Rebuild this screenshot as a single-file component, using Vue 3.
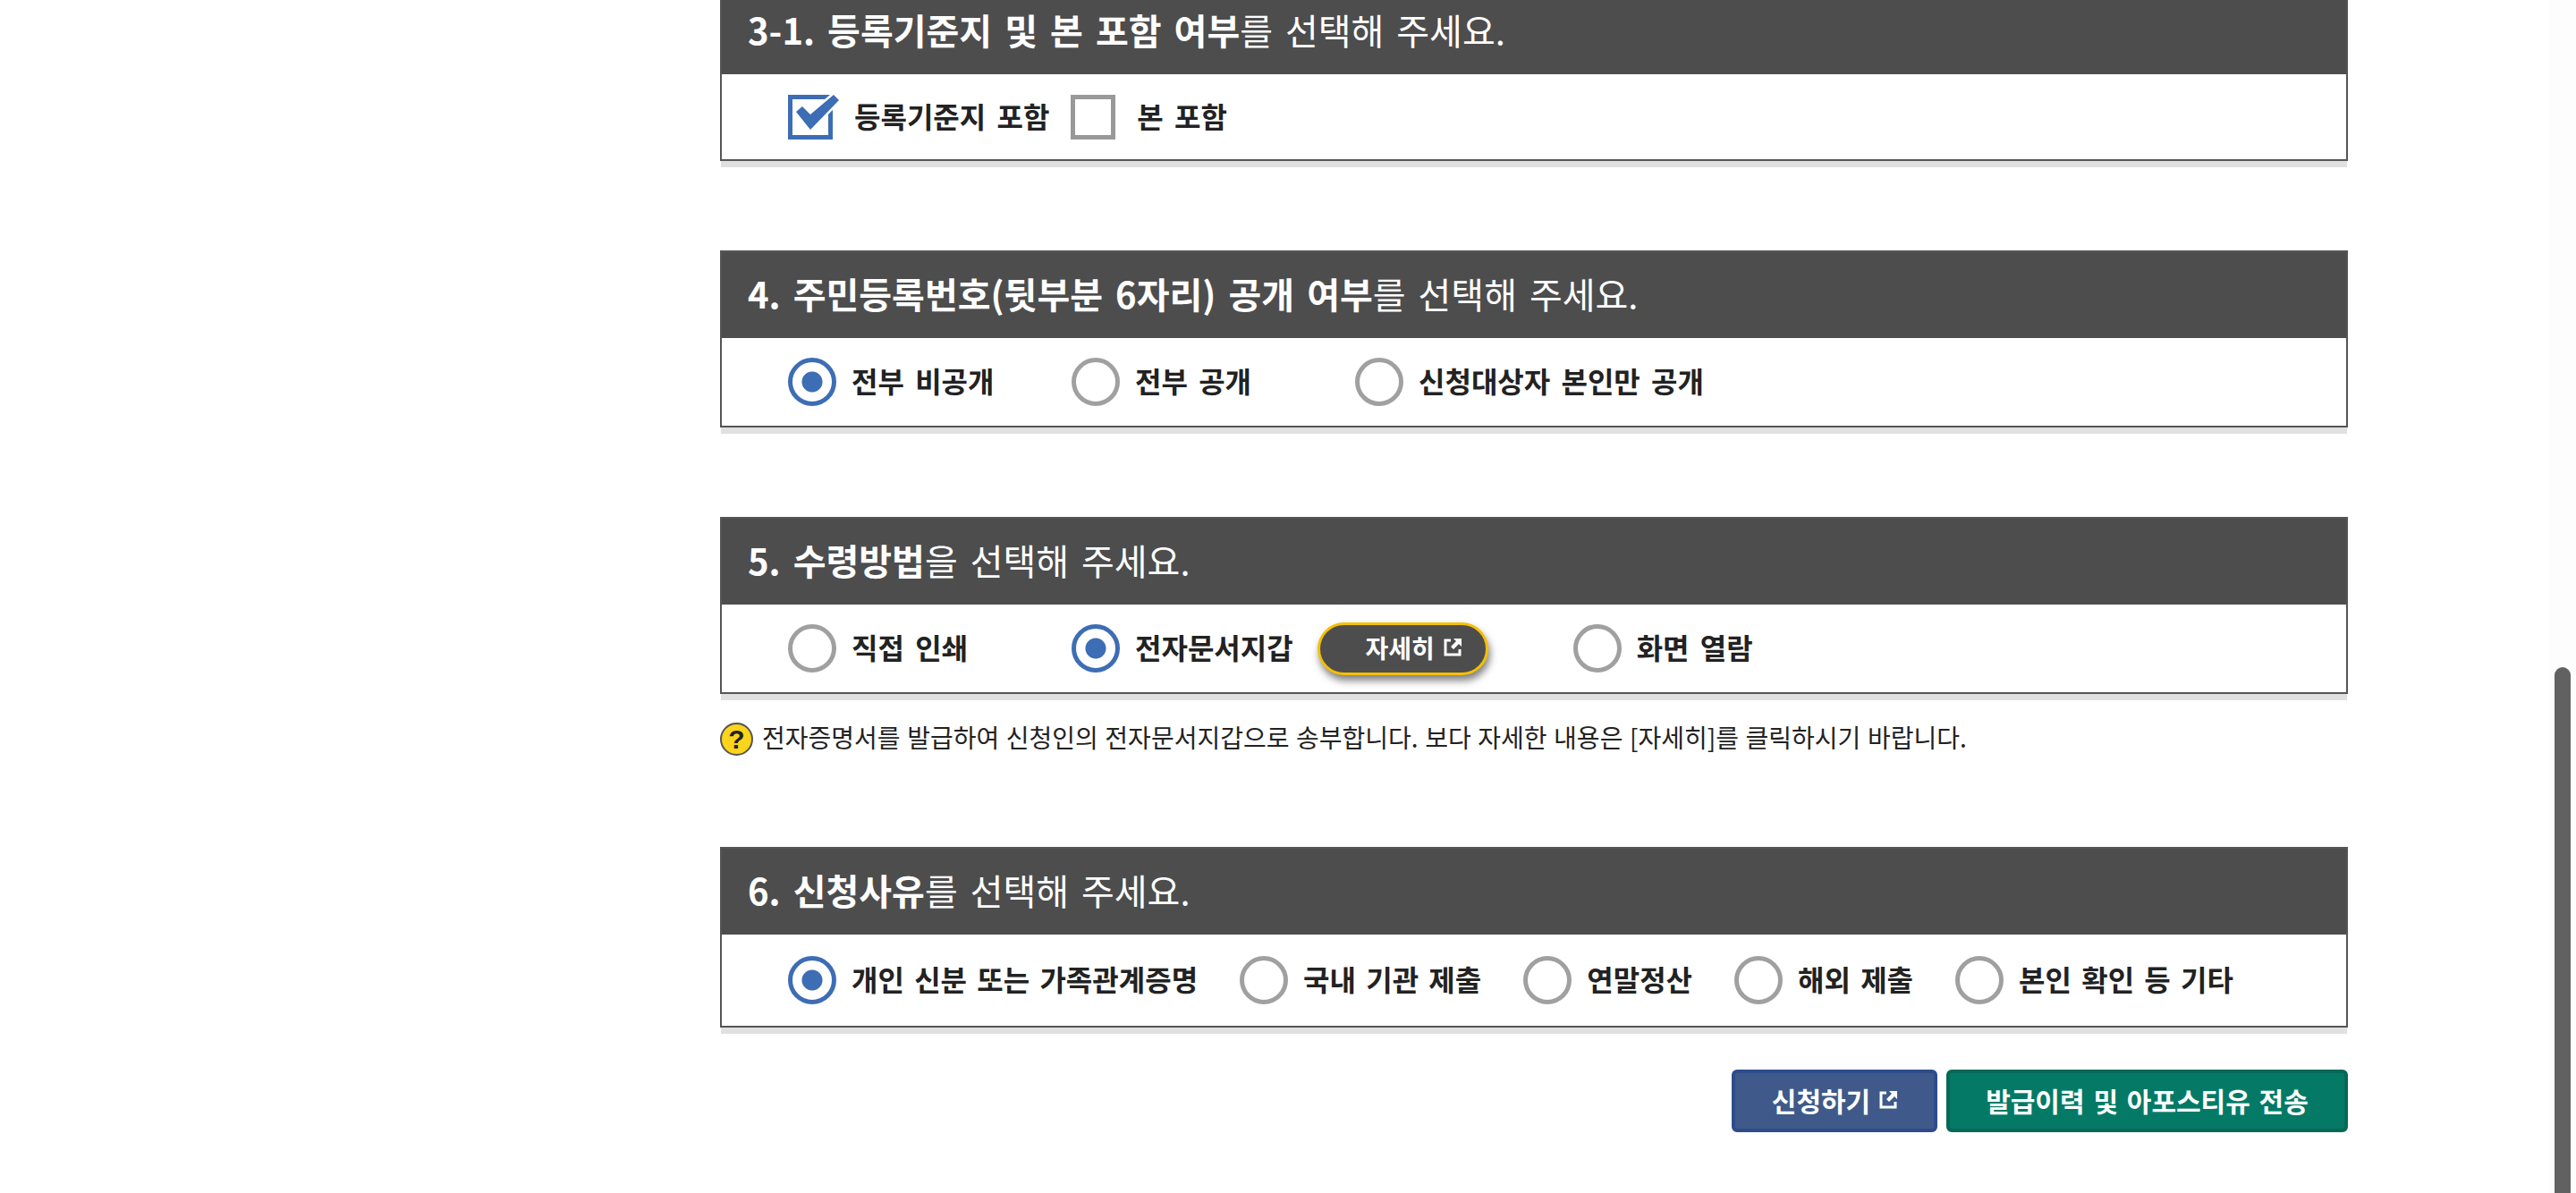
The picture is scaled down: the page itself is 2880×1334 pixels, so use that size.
<script setup>
// one entry per form section, selected option is marked with checked
const residentOptions = [
  { label: '전부 비공개', checked: true },
  { label: '전부 공개' },
  { label: '신청대상자 본인만 공개' }
]
const reasonOptions = [
  { label: '개인 신분 또는 가족관계증명', checked: true },
  { label: '국내 기관 제출' },
  { label: '연말정산' },
  { label: '해외 제출' },
  { label: '본인 확인 등 기타' }
]
</script>

<template>
  <div class="page">
    <section class="block first">
      <h2 class="head"><strong>3-1. 등록기준지 및 본 포함 여부</strong>를 선택해 주세요.</h2>
      <div class="body check-row">
        <label class="check-item">
          <span class="box on">
            <svg class="tick" viewBox="0 0 60 50">
              <path d="M9 19 L16 13 L25 22 L51 0 L57 6 L25 39 Z" fill="#fff" stroke="#fff" stroke-width="5" />
              <path d="M9 19 L16 13 L25 22 L51 0 L57 6 L25 39 Z" fill="#3d6db5" />
            </svg>
          </span>
          <span class="text">등록기준지 포함</span>
        </label>
        <label class="check-item">
          <span class="box"></span>
          <span class="text">본 포함</span>
        </label>
      </div>
    </section>

    <section class="block">
      <h2 class="head"><strong>4. 주민등록번호(뒷부분 6자리) 공개 여부</strong>를 선택해 주세요.</h2>
      <div class="body radio-row">
        <label v-for="opt in residentOptions" :key="opt.label" class="radio-item fixed">
          <span class="radio" :class="{ on: opt.checked }"></span>
          <span class="text">{{ opt.label }}</span>
        </label>
      </div>
    </section>

    <section class="block">
      <h2 class="head"><strong>5. 수령방법</strong>을 선택해 주세요.</h2>
      <div class="body radio-row">
        <label class="radio-item fixed">
          <span class="radio"></span>
          <span class="text">직접 인쇄</span>
        </label>
        <label class="radio-item">
          <span class="radio on"></span>
          <span class="text">전자문서지갑</span>
        </label>
        <button class="more" type="button">
          자세히
          <svg class="ext" viewBox="0 0 20 20"><path d="M8 2H2v16h16v-6" fill="none" stroke="currentColor" stroke-width="3" /><path d="M11 0h9v9l-3-3-6 6-3-3 6-6z" fill="currentColor" /></svg>
        </button>
        <label class="radio-item last">
          <span class="radio"></span>
          <span class="text">화면 열람</span>
        </label>
      </div>
    </section>

    <p class="help">
      <span class="help-icon">?</span>
      <span class="help-text">전자증명서를 발급하여 신청인의 전자문서지갑으로 송부합니다. 보다 자세한 내용은 [자세히]를 클릭하시기 바랍니다.</span>
    </p>

    <section class="block reason">
      <h2 class="head"><strong>6. 신청사유</strong>를 선택해 주세요.</h2>
      <div class="body radio-row spaced">
        <label v-for="opt in reasonOptions" :key="opt.label" class="radio-item">
          <span class="radio" :class="{ on: opt.checked }"></span>
          <span class="text">{{ opt.label }}</span>
        </label>
      </div>
    </section>

    <div class="actions">
      <button class="btn blue" type="button">
        신청하기
        <svg class="ext" viewBox="0 0 20 20"><path d="M8 2H2v16h16v-6" fill="none" stroke="currentColor" stroke-width="3" /><path d="M11 0h9v9l-3-3-6 6-3-3 6-6z" fill="currentColor" /></svg>
      </button>
      <button class="btn green" type="button">발급이력 및 아포스티유 전송</button>
    </div>

    <!-- page scrollbar, the shot was taken scrolled to the bottom -->
    <div class="scrollbar"><div class="thumb"></div></div>
  </div>
</template>

<style>
html, body {
  overflow: hidden;
  background: #fff;
}
</style>

<style scoped>
.page {
  width: 1820px;
  margin-left: 805px;
  margin-top: -15px;
  font-family: "Noto Sans CJK KR", "Noto Sans", sans-serif;
  color: #222;
}

.block {
  margin-top: 100px;
  border: 2px solid #555;
  background: #fff;
  box-shadow: 0 8px 0 -1px #e0e0e0;
}
.block.first {
  margin-top: 0;
}
.block.reason {
  margin-top: 100px;
}

.head {
  margin: 0;
  height: 96px;
  box-sizing: border-box;
  padding: 0 0 4px 29px;
  display: flex;
  align-items: center;
  background: #4d4d4d;
  color: #fff;
  font-size: 40px;
  font-weight: 400;
  word-spacing: 5px;
  white-space: pre;
}
.head strong {
  font-weight: 700;
}

.body {
  display: flex;
  align-items: center;
  padding: 0 0 0 74px;
  height: 98px;
  box-sizing: border-box;
}
.first .body {
  height: 95px;
}
.reason .body {
  height: 102px;
}
.spaced {
  gap: 47px;
}

.check-item,
.radio-item {
  display: flex;
  align-items: center;
}
.radio-item.fixed {
  width: 317px;
}
.text {
  font-size: 32px;
  font-weight: 700;
  word-spacing: 5px;
  margin-left: 17px;
  padding-bottom: 4px;
  white-space: nowrap;
}
.reason .text {
  word-spacing: 4px;
}
.check-item .text {
  margin-left: 18px;
}

.box {
  position: relative;
  width: 50px;
  height: 50px;
  box-sizing: border-box;
  border: 5px solid #999;
  margin-right: 6px;
}
.box.on {
  border-color: #3d6db5;
}
.tick {
  position: absolute;
  left: -5px;
  top: -5px;
  width: 60px;
  height: 50px;
  overflow: visible;
}
.check-item + .check-item {
  margin-left: 24px;
}

.radio {
  flex: none;
  width: 54px;
  height: 54px;
  box-sizing: border-box;
  border: 5px solid #a0a0a0;
  border-radius: 50%;
  background: #fff;
}
.radio.on {
  border-color: #3d6db5;
  background: radial-gradient(circle, #3d6db5 0 11px, #fff 12px);
}

.more {
  margin-left: 27px;
  width: 191px;
  height: 59px;
  box-sizing: border-box;
  padding: 0 0 2px 24px;
  border: 3px solid #f5c000;
  border-radius: 30px;
  background: #4d4d4d;
  color: #fff;
  font: 700 28px "Noto Sans CJK KR", sans-serif;
  box-shadow: 2px 6px 8px rgba(0, 0, 0, 0.5);
  display: flex;
  align-items: center;
  justify-content: center;
  gap: 10px;
}
.ext {
  flex: none;
  width: 20px;
  height: 20px;
}
.radio-item.last {
  margin-left: 95px;
}

.help {
  display: flex;
  align-items: center;
  gap: 10px;
  margin: 30px 0 0;
  font-size: 28px;
  line-height: 37px;
  color: #222;
}
.help-text {
  word-spacing: 1.3px;
  margin-bottom: 4px;
}
.help-icon {
  flex: none;
  width: 37px;
  height: 37px;
  box-sizing: border-box;
  border: 2px solid #555;
  border-radius: 50%;
  background: #fcd41c;
  color: #222;
  font-family: "Liberation Sans", sans-serif;
  font-size: 30px;
  font-weight: 700;
  line-height: 33px;
  text-align: center;
}

.actions {
  display: flex;
  justify-content: flex-end;
  gap: 10px;
  margin-top: 47px;
}
.btn {
  height: 70px;
  box-sizing: border-box;
  padding-bottom: 3px;
  border: 4px solid;
  border-radius: 6px;
  color: #fff;
  font: 700 30px "Noto Sans CJK KR", sans-serif;
  word-spacing: 3px;
  display: flex;
  align-items: center;
  justify-content: center;
  gap: 10px;
}
.btn.blue {
  width: 230px;
  background: #3f5a8a;
  border-color: #2f4c8a;
}
.btn.green {
  width: 449px;
  background: #047a66;
  border-color: #066857;
}

.scrollbar {
  position: fixed;
  top: 0;
  right: 0;
  bottom: 0;
  width: 30px;
  background: #fdfdfd;
}
.thumb {
  position: absolute;
  top: 746px;
  bottom: 0;
  left: 6px;
  width: 18px;
  border-radius: 9px 9px 0 0;
  background: #616161;
}
</style>
